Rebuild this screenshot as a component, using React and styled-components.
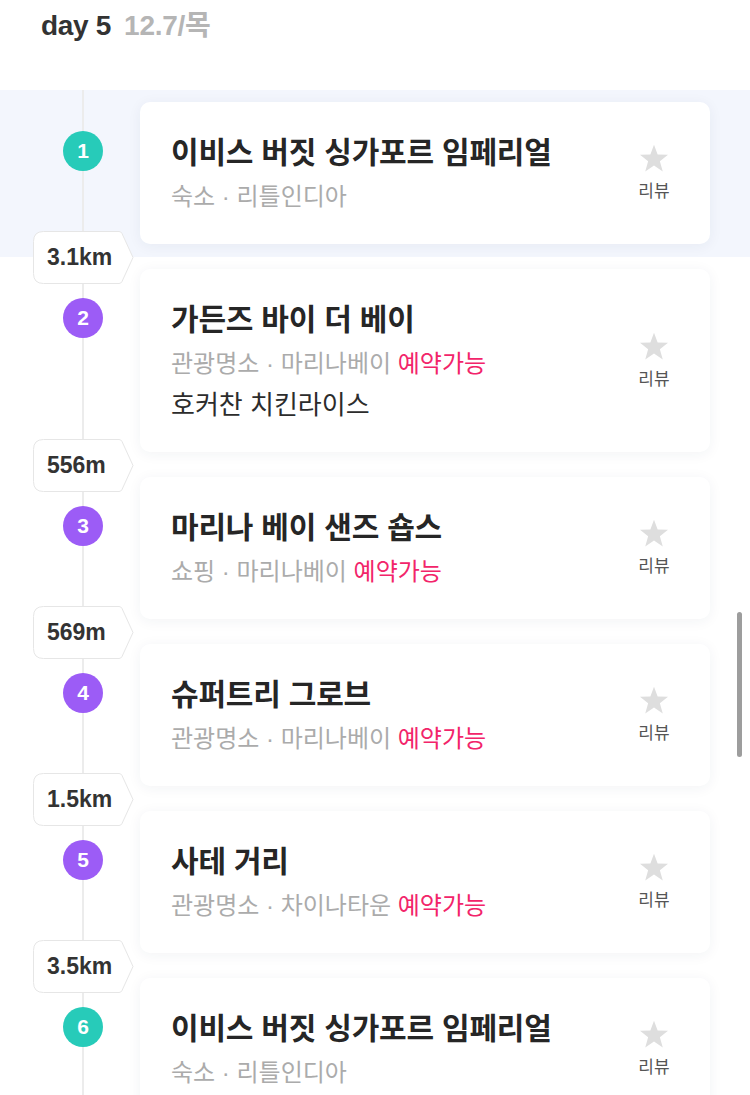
import styled, { createGlobalStyle } from "styled-components";

const GlobalStyle = createGlobalStyle`
  html, body {
    margin: 0;
    padding: 0;
    background: #fff;
    font-family: "Liberation Sans", "Noto Sans CJK KR", sans-serif;
    overflow: hidden;
  }
`;

const Page = styled.div`
  width: 750px;
  height: 1095px;
  overflow: hidden;
  position: relative;
`;

const Header = styled.div`
  height: 90px;
  padding: 9px 0 0 41px;
  box-sizing: border-box;
  display: flex;
  align-items: baseline;
  gap: 13px;
  font-size: 28px;
  line-height: 34px;
  font-weight: 700;
  letter-spacing: -0.3px;

  .day {
    color: #333;
  }
  .date {
    color: #b5b5b5;
  }
`;

const Row = styled.div`
  position: relative;
  display: flex;
  padding: 12px 40px 13px 0;
  background:
    linear-gradient(#ececec, #ececec) 82px 0 / 2px 100% no-repeat,
    ${(p) => (p.$active ? "#f3f6fd" : "#fff")};
`;

const Rail = styled.div`
  width: 140px;
  flex-shrink: 0;
  padding-top: 29px;
  box-sizing: border-box;
`;

const Num = styled.div`
  width: 40px;
  height: 40px;
  margin-left: 63px;
  border-radius: 50%;
  background: ${(p) => (p.$kind === "stay" ? "#27cbb9" : "#9c5cf6")};
  color: #fff;
  font-size: 21px;
  font-weight: 700;
  display: flex;
  align-items: center;
  justify-content: center;
`;

const Card = styled.div`
  flex: 1;
  display: flex;
  align-items: center;
  background: #fff;
  border-radius: 10px;
  box-shadow: 0 2px 14px rgba(40, 50, 90, 0.06);
  padding: 31px 26px 31px 31px;
`;

const Info = styled.div`
  flex: 1;
  min-width: 0;
`;

const Title = styled.div`
  font-size: 30px;
  line-height: 40px;
  font-weight: 700;
  color: #262626;
  letter-spacing: -0.2px;
`;

const Meta = styled.div`
  margin-top: 8px;
  font-size: 24px;
  line-height: 32px;
  color: #ababab;

  em {
    font-style: normal;
    color: #f2246a;
  }
`;

const Memo = styled.div`
  margin-top: 9px;
  font-size: 26px;
  line-height: 32px;
  color: #2c2c2c;
`;

const Review = styled.div`
  width: 60px;
  display: flex;
  flex-direction: column;
  align-items: center;
  gap: 4px;
  font-size: 17px;
  color: #555;
`;

const Distance = styled.div`
  position: absolute;
  left: 33px;
  bottom: -27px;
  z-index: 2;
  width: 101px;
  height: 53px;
  display: flex;
  align-items: center;
  padding-left: 14px;
  box-sizing: border-box;
  font-size: 23px;
  font-weight: 700;
  color: #333;

  svg {
    position: absolute;
    left: 0;
    top: 0;
  }
  span {
    position: relative;
  }
`;

const Scrollbar = styled.div`
  position: absolute;
  left: 737px;
  top: 612px;
  width: 5px;
  height: 145px;
  border-radius: 3px;
  background: #9d9d9d;
`;

const Star = () => (
  <svg width="30" height="29" viewBox="0 0 24 23">
    <polygon
      points="12,0.5 14.9,8.2 23.2,8.5 16.7,13.7 19,21.8 12,17.1 5,21.8 7.3,13.7 0.8,8.5 9.1,8.2"
      fill="#dedede"
    />
  </svg>
);

const Tag = ({ text }) => (
  <Distance>
    <svg width="101" height="53" viewBox="0 0 101 53">
      <path
        d="M10.5 0.5 H86 Q88 0.5 89 2.5 L100 26.5 L89 50.5 Q88 52.5 86 52.5 H10.5 Q0.5 52.5 0.5 42.5 V10.5 Q0.5 0.5 10.5 0.5 Z"
        fill="#fff"
        stroke="#e6e6e6"
      />
    </svg>
    <span>{text}</span>
  </Distance>
);

const places = [
  { title: "이비스 버짓 싱가포르 임페리얼", cat: "숙소", area: "리틀인디아", kind: "stay", active: true, dist: "3.1km" },
  { title: "가든즈 바이 더 베이", cat: "관광명소", area: "마리나베이", book: true, memo: "호커찬 치킨라이스", dist: "556m" },
  { title: "마리나 베이 샌즈 숍스", cat: "쇼핑", area: "마리나베이", book: true, dist: "569m" },
  { title: "슈퍼트리 그로브", cat: "관광명소", area: "마리나베이", book: true, dist: "1.5km" },
  { title: "사테 거리", cat: "관광명소", area: "차이나타운", book: true, dist: "3.5km" },
  { title: "이비스 버짓 싱가포르 임페리얼", cat: "숙소", area: "리틀인디아", kind: "stay" },
];

export default function App() {
  return (
    <Page>
      <GlobalStyle />
      <Header>
        <span className="day">day 5</span>
        <span className="date">12.7/목</span>
      </Header>
      {places.map((p, i) => (
        <Row key={i} $active={p.active}>
          <Rail>
            <Num $kind={p.kind}>{i + 1}</Num>
          </Rail>
          <Card>
            <Info>
              <Title>{p.title}</Title>
              <Meta>
                {p.cat} · {p.area}
                {p.book && <em> 예약가능</em>}
              </Meta>
              {p.memo && <Memo>{p.memo}</Memo>}
            </Info>
            <Review>
              <Star />
              리뷰
            </Review>
          </Card>
          {p.dist && <Tag text={p.dist} />}
        </Row>
      ))}
      <Scrollbar />
    </Page>
  );
}
